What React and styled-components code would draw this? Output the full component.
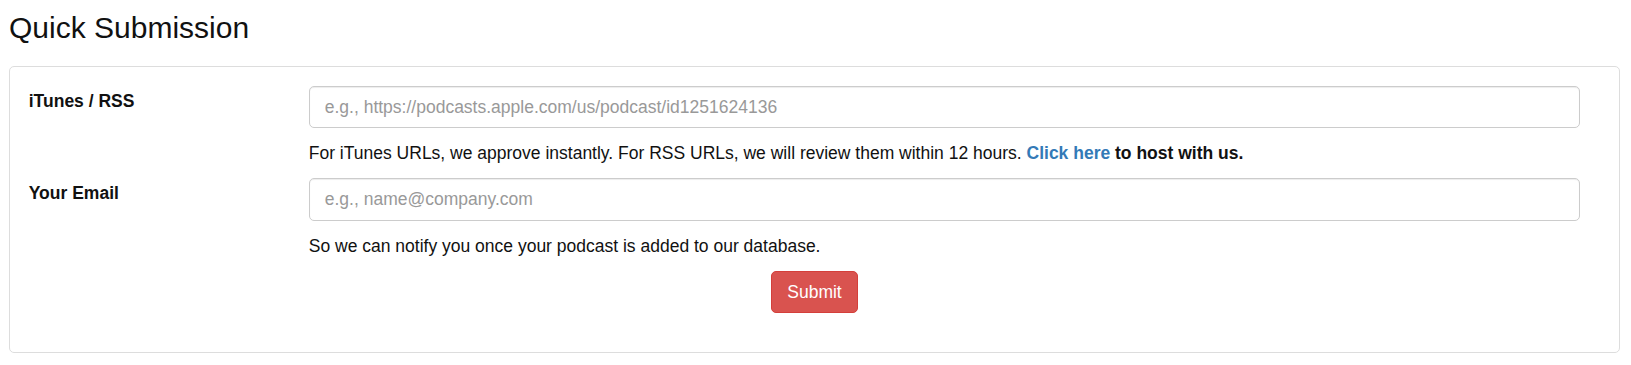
import React from "react";
import styled, { createGlobalStyle } from "styled-components";

const GlobalStyle = createGlobalStyle`
  html, body {
    margin: 0;
    padding: 0;
    background: #fff;
  }
  body {
    font-family: "Liberation Sans", Arial, Helvetica, sans-serif;
    font-size: 17.5px;
    line-height: 1.42857;
    color: #222;
  }
  * {
    box-sizing: border-box;
  }
`;

const Page = styled.div`
  padding: 0 11px 0 9px;
`;

const Title = styled.h3`
  margin: 11px 0 22px;
  font-size: 30px;
  font-weight: 400;
  line-height: 33px;
  color: #111;
`;

const Panel = styled.div`
  border: 1px solid #ddd;
  border-radius: 5px;
  padding: 18.75px 18.75px 38.5px;
  background: #fff;
`;

const FormRow = styled.div`
  display: grid;
  grid-template-columns: 280px 1fr;
  margin-right: 20px;
`;

const Label = styled.label`
  padding-top: 3px;
  font-weight: 700;
  color: #111;
`;

const Field = styled.div`
  display: flex;
  flex-direction: column;
`;

const Input = styled.input`
  display: block;
  width: 100%;
  height: 42.5px;
  padding: 7.5px 15px;
  font-family: inherit;
  font-size: 17.5px;
  line-height: 25px;
  color: #555;
  background: #fff;
  border: 1px solid #ccc;
  border-radius: 5px;
  box-shadow: inset 0 1px 1px rgba(0, 0, 0, 0.075);
  outline: none;

  &::placeholder {
    color: #999;
  }
`;

const Help = styled.p`
  margin: 12.75px 0 12.5px;
  color: #111;
`;

const Link = styled.a`
  color: #337ab7;
  font-weight: 700;
  text-decoration: none;
`;

const Strong = styled.strong`
  font-weight: 700;
`;

const SubmitRow = styled.div`
  display: flex;
  justify-content: center;
`;

const Button = styled.button`
  padding: 7.5px 15px;
  font-family: inherit;
  font-size: 17.5px;
  line-height: 25px;
  color: #fff;
  background: ${(p) => (p.danger ? "#d9534f" : "#337ab7")};
  border: 1px solid ${(p) => (p.danger ? "#d43f3a" : "#2e6da4")};
  border-radius: 5px;
  cursor: pointer;
`;

const App = () => {
  return (
    <Page>
      <GlobalStyle />
      <Title>Quick Submission</Title>
      <Panel>
        <form onSubmit={(e) => e.preventDefault()}>
          <FormRow>
            <Label htmlFor="feed">iTunes / RSS</Label>
            <Field>
              <Input
                id="feed"
                type="text"
                placeholder="e.g., https://podcasts.apple.com/us/podcast/id1251624136"
              />
              <Help>
                For iTunes URLs, we approve instantly. For RSS URLs, we will
                review them within 12 hours. <Link href="#">Click here</Link>{" "}
                <Strong>to host with us.</Strong>
              </Help>
            </Field>
          </FormRow>
          <FormRow>
            <Label htmlFor="email">Your Email</Label>
            <Field>
              <Input
                id="email"
                type="email"
                placeholder="e.g., name@company.com"
              />
              <Help>So we can notify you once your podcast is added to our database.</Help>
            </Field>
          </FormRow>
          <SubmitRow>
            <Button danger type="submit">
              Submit
            </Button>
          </SubmitRow>
        </form>
      </Panel>
    </Page>
  );
};

export default App;
